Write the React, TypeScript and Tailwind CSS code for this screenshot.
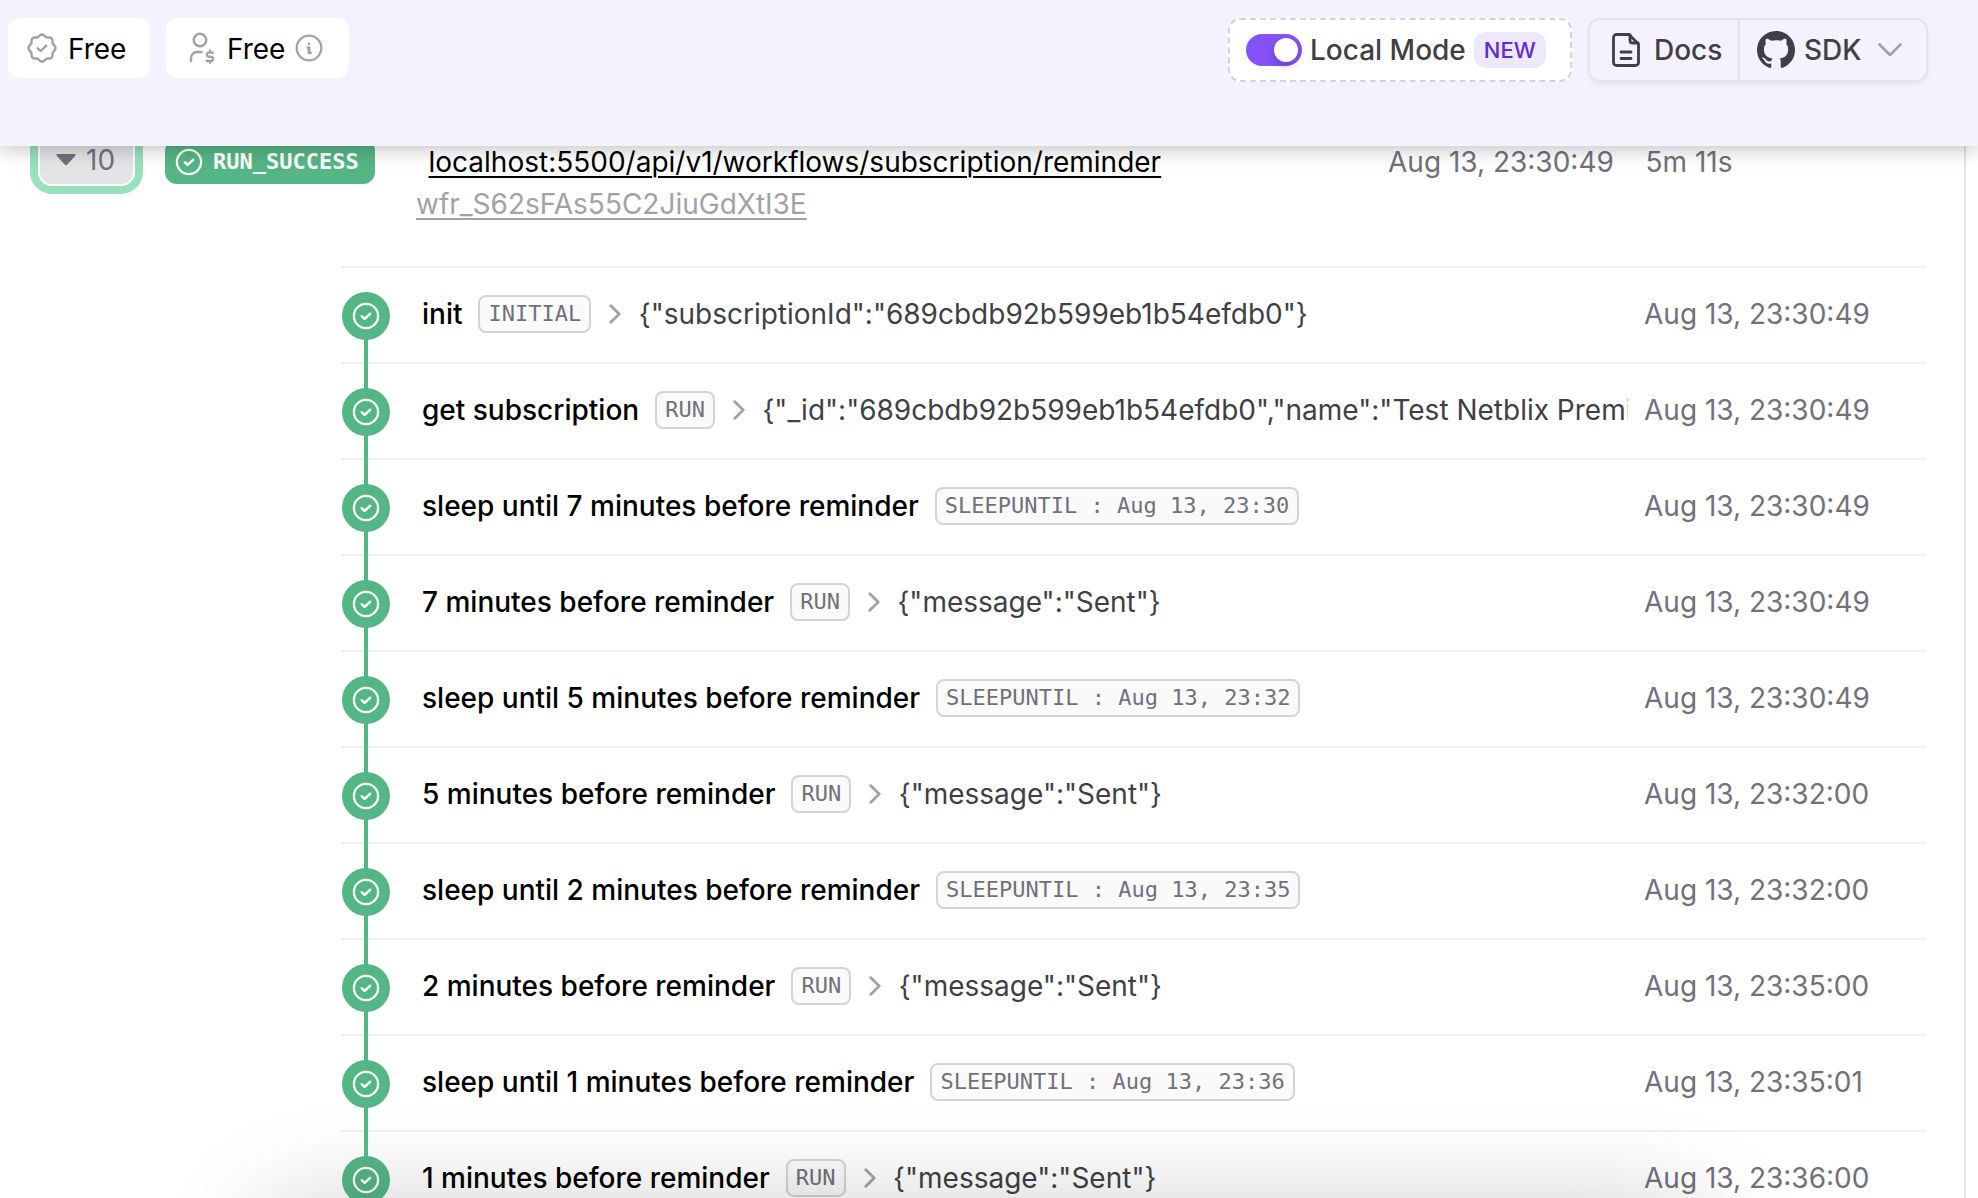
import React from "react";

type Step = { name: string; tag: string; out?: string; time: string };

const steps: Step[] = [
  { name: "init", tag: "INITIAL", out: '{"subscriptionId":"689cbdb92b599eb1b54efdb0"}', time: "Aug 13, 23:30:49" },
  { name: "get subscription", tag: "RUN", out: '{"_id":"689cbdb92b599eb1b54efdb0","name":"Test Netblix Premi', time: "Aug 13, 23:30:49" },
  { name: "sleep until 7 minutes before reminder", tag: "SLEEPUNTIL : Aug 13, 23:30", time: "Aug 13, 23:30:49" },
  { name: "7 minutes before reminder", tag: "RUN", out: '{"message":"Sent"}', time: "Aug 13, 23:30:49" },
  { name: "sleep until 5 minutes before reminder", tag: "SLEEPUNTIL : Aug 13, 23:32", time: "Aug 13, 23:30:49" },
  { name: "5 minutes before reminder", tag: "RUN", out: '{"message":"Sent"}', time: "Aug 13, 23:32:00" },
  { name: "sleep until 2 minutes before reminder", tag: "SLEEPUNTIL : Aug 13, 23:35", time: "Aug 13, 23:32:00" },
  { name: "2 minutes before reminder", tag: "RUN", out: '{"message":"Sent"}', time: "Aug 13, 23:35:00" },
  { name: "sleep until 1 minutes before reminder", tag: "SLEEPUNTIL : Aug 13, 23:36", time: "Aug 13, 23:35:01" },
  { name: "1 minutes before reminder", tag: "RUN", out: '{"message":"Sent"}', time: "Aug 13, 23:36:00" },
];

function CheckCircle() {
  return (
    <svg viewBox="0 0 28 28" fill="none" stroke="currentColor" strokeWidth="2.6" strokeLinecap="round" strokeLinejoin="round" className="size-7 shrink-0">
      <circle cx="14" cy="14" r="12.1" strokeWidth="2.3" />
      <path d="M9.900 14.300l2.700 2.600 5.500-5" />
    </svg>
  );
}

function SealCheck() {
  return (
    <svg viewBox="0 0 24 24" fill="none" stroke="currentColor" strokeWidth="1.6" strokeLinecap="round" strokeLinejoin="round" className="size-[36px] text-[#a1a1aa]">
      <path d="M5 7.2A2.2 2.2 0 0 1 7.2 5h1a2.2 2.2 0 0 0 1.55-.64l.7-.7a2.2 2.2 0 0 1 3.12 0l.7.7c.412.41.97.64 1.55.64h1a2.2 2.2 0 0 1 2.2 2.2v1c0 .58.23 1.138.64 1.55l.7.7a2.2 2.2 0 0 1 0 3.12l-.7.7a2.2 2.2 0 0 0-.64 1.55v1a2.2 2.2 0 0 1-2.2 2.2h-1a2.2 2.2 0 0 0-1.55.64l-.7.7a2.2 2.2 0 0 1-3.12 0l-.7-.7a2.2 2.2 0 0 0-1.55-.64h-1a2.2 2.2 0 0 1-2.2-2.2v-1a2.2 2.2 0 0 0-.64-1.55l-.7-.7a2.2 2.2 0 0 1 0-3.12l.7-.7A2.2 2.2 0 0 0 5 8.2z" />
      <path d="M9.2 12.2l1.9 1.8 3.7-3.6" />
    </svg>
  );
}

function UserDollar() {
  return (
    <svg viewBox="0 0 26 32" fill="none" stroke="currentColor" strokeWidth="2.4" strokeLinecap="round" strokeLinejoin="round" className="h-8 w-[26px] text-[#a1a1aa]">
      <circle cx="12" cy="8" r="6.3" />
      <path d="M3 29v-3a6 6 0 0 1 6-6h4.5" />
      <path d="M25 20.600h-4a2.100 2.100 0 0 0 0 4.200h2a2.100 2.100 0 0 1 0 4.200h-4.200M22 18.800v1.800M22 29v1.800" />
    </svg>
  );
}

function Info() {
  return (
    <svg viewBox="0 0 28 28" fill="none" stroke="currentColor" strokeWidth="2.3" strokeLinecap="round" strokeLinejoin="round" className="size-7 text-[#a1a1aa]">
      <circle cx="14" cy="14" r="12.3" />
      <path strokeWidth="2.8" d="M14 9.800h.02M12.800 13.600H14v5.200h1.600" />
    </svg>
  );
}

function FileText() {
  return (
    <svg viewBox="0 0 28 34" fill="none" stroke="currentColor" strokeWidth="2.8" strokeLinecap="round" strokeLinejoin="round" className="h-[34px] w-7">
      <path d="M17 1.500H4.500A3 3 0 0 0 1.500 4.500V29.500a3 3 0 0 0 3 3H23.500a3 3 0 0 0 3-3V11z" />
      <path d="M18 1.800V7.500a2.500 2.500 0 0 0 2.500 2.500H26M9 19h10M9 25.500h10" />
    </svg>
  );
}

function Octocat() {
  return (
    <svg viewBox="0 0 16 16" fill="currentColor" className="size-[38px]">
      <path d="M8 0C3.58 0 0 3.58 0 8c0 3.54 2.29 6.53 5.47 7.59.4.07.55-.17.55-.38 0-.19-.01-.82-.01-1.49-2.01.37-2.53-.49-2.69-.94-.09-.23-.48-.94-.82-1.13-.28-.15-.68-.52-.01-.53.63-.01 1.080.58 1.230.82.72 1.210 1.870.87 2.330.66.07-.52.28-.87.51-1.070-1.780-.2-3.640-.89-3.640-3.950 0-.87.31-1.590.82-2.150-.08-.2-.36-1.020.08-2.120 0 0 .67-.21 2.200.82.64-.18 1.320-.27 2-.27s1.360.09 2 .27c1.530-1.040 2.200-.82 2.200-.82.44 1.100.16 1.920.08 2.120.51.56.82 1.270.82 2.150 0 3.070-1.870 3.750-3.650 3.950.29.25.54.73.54 1.480 0 1.070-.01 1.930-.01 2.200 0 .21.15.46.55.38A8.010 8.010 0 0 0 16 8c0-4.420-3.580-8-8-8z" />
    </svg>
  );
}

function Header() {
  return (
    <header className="relative z-10 flex h-[146px] items-start justify-between bg-[#f4f2fe] pt-[18px] pr-[50px] pl-2 text-[28px] leading-10 shadow-[0_2px_20px_rgba(0,0,0,0.27)]">
      <div className="flex gap-4">
        <div className="flex h-[60px] w-[142px] items-center rounded-xl bg-white pl-4 text-black">
          <SealCheck />
          <span className="ml-2 pt-px">Free</span>
        </div>
        <div className="flex h-[60px] w-[183px] items-center rounded-xl bg-white pl-[22px] text-black">
          <UserDollar />
          <span className="ml-[13px] pt-px">Free</span>
          <span className="ml-2.5"><Info /></span>
        </div>
      </div>
      <div className="flex gap-4 font-medium text-[#3f3f46]">
        <div className="flex h-16 w-[344px] items-center rounded-xl border-2 border-dashed border-[#d4d4d8] bg-white pl-4">
          <div className="flex h-8 w-14 items-center justify-end rounded-full bg-[#8552f8] pr-1">
            <div className="size-6 rounded-full bg-white shadow-[0_4px_8px_rgba(0,0,0,0.2)]" />
          </div>
          <span className="ml-2">Local Mode</span>
          <span className="ml-2 flex h-9 w-[72px] items-center justify-center rounded-xl bg-[#ede9fc] text-[22px] text-[#6528d7]">NEW</span>
        </div>
        <div className="flex h-16 w-[340px] rounded-xl border-2 border-[#e4e4e7] shadow-[0_3px_4px_rgba(0,0,0,0.05)]">
          <div className="flex w-[150px] items-center border-r-2 border-[#e4e4e7] pl-[22px]">
            <FileText />
            <span className="ml-[14px]">Docs</span>
          </div>
          <div className="flex items-center pl-[17px]">
            <Octocat />
            <span className="ml-[9px]">SDK</span>
            <svg viewBox="0 0 24 14" fill="none" stroke="#a1a1aa" strokeWidth="2.6" strokeLinecap="round" strokeLinejoin="round" className="ml-4 h-[14px] w-6">
              <path d="M1.500 1.500L12 12L22.500 1.500" />
            </svg>
          </div>
        </div>
      </div>
    </header>
  );
}

function RunSummary() {
  return (
    <div className="flex h-[120px] items-start pl-[30px] text-[28px] leading-8 text-[#71717a]">
      <div className="-mt-5 h-[68px] w-[113px] shrink-0 rounded-[22px] bg-[#98e1bb] p-2">
        <div className="flex h-[52px] items-center rounded-[14px] border-2 border-white bg-[#e4e4e7] pl-4">
          <svg viewBox="0 0 20 12" className="h-3 w-5" fill="currentColor">
            <path d="M1.500 0h17c1.200 0 1.500 1 .8 1.800l-8 8.700c-.8.900-1.800.9-2.600 0l-8-8.700C0 1 .3 0 1.500 0z" />
          </svg>
          <span className="ml-2.5">10</span>
        </div>
      </div>
      <div className="-mt-[7px] ml-[22px] flex h-[45px] w-[210px] shrink-0 items-center rounded-xl bg-[#55b685] pl-2.5 font-['DejaVu_Sans_Mono',monospace] text-[22px] font-bold text-white">
        <CheckCircle />
        <span className="ml-2.5">RUN_SUCCESS</span>
      </div>
      <div className="ml-[41px] w-[972px] shrink-0">
        <div className="ml-[12.5px] text-black underline decoration-2 underline-offset-4">localhost:5500/api/v1/workflows/subscription/reminder</div>
        <div className="mt-2.5 text-[#a1a1aa] underline decoration-2 underline-offset-4">wfr_S62sFAs55C2JiuGdXtI3E</div>
      </div>
      <div className="w-[257.5px] shrink-0">Aug 13, 23:30:49</div>
      <div>5m 11s</div>
    </div>
  );
}

function StepRow({ step, last }: { step: Step; last: boolean }) {
  return (
    <div className="relative flex h-24 items-start border-t-2 border-[#f2f2f3] pl-px text-[28px] leading-10">
      {!last && <div className="absolute top-[71px] left-[23px] z-10 h-[50px] w-1 bg-[#55b685]" />}
      <div className="mt-6 flex size-12 shrink-0 items-center justify-center rounded-full bg-[#55b685] text-white">
        <CheckCircle />
      </div>
      <div className="mt-[26px] ml-8 flex w-[1206px] shrink-0 items-center overflow-hidden whitespace-nowrap">
        <span className="font-medium text-black">{step.name}</span>
        <span className="ml-4 flex h-[38px] items-center rounded-lg border-2 border-[#d4d4d8] bg-[#fafafa] px-2 font-['DejaVu_Sans_Mono',monospace] text-[22px] text-[#71717a]">{step.tag}</span>
        {step.out && (
          <>
            <svg viewBox="0 0 12 20" fill="none" stroke="#a1a1aa" strokeWidth="2.800" strokeLinecap="round" strokeLinejoin="round" className="ml-[18px] h-5 w-3 shrink-0">
              <path d="M1.800 1.800L10.200 10L1.800 18.200" />
            </svg>
            <span className="ml-[17.5px] text-[#3f3f46]">{step.out}</span>
          </>
        )}
      </div>
      <div className="mt-[26px] ml-4 whitespace-nowrap text-[#71717a]">{step.time}</div>
    </div>
  );
}

export default function App() {
  return (
    <div className="relative h-[1198px] w-[1978px] overflow-hidden bg-white font-['Inter',sans-serif]">
      <Header />
      <main className="h-[1100px] w-[1966px] border-r-2 border-[#e4e4e7]">
        <RunSummary />
        <div className="ml-[341px] w-[1585px]">
          {steps.map((s, i) => (
            <StepRow key={s.name} step={s} last={i === steps.length - 1} />
          ))}
        </div>
      </main>
      <div className="absolute top-[1214px] left-[270px] h-[200px] w-[1430px] rounded-3xl shadow-[0_0_110px_rgba(0,0,0,0.24)]" />
    </div>
  );
}
